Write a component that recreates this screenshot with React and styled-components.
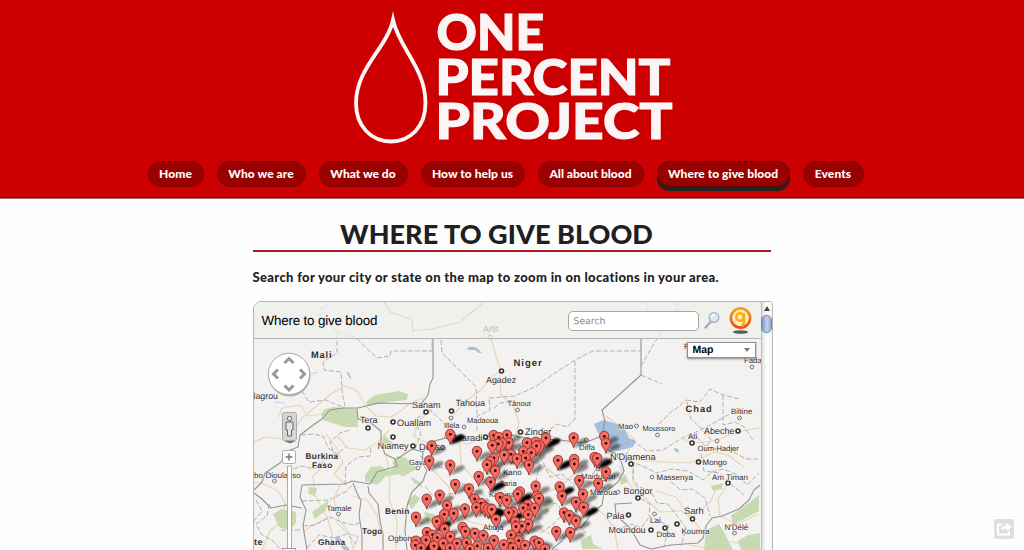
import React from "react";
import styled, { createGlobalStyle } from "styled-components";

const Global = createGlobalStyle`
  html, body { margin: 0; height: 100%; overflow: hidden; background: #fefefe; }
  body { font-family: Lato, "Liberation Sans", sans-serif; color: #222; }
  * { box-sizing: border-box; }
`;

const Page = styled.div`
  display: flex;
  flex-direction: column;
  align-items: center;
  height: 550px;
  overflow: hidden;
`;

const Header = styled.header`
  display: flex;
  flex-direction: column;
  align-items: center;
  flex: none;
  width: 100%;
  height: 199px;
  background: #cc0000;
  border-bottom: 1px solid #b56a6a;
  box-shadow: inset 0 -1px 0 #8f0000;
`;

const Logo = styled.svg`
  display: block;
  flex: none;
  width: 350px;
  height: 150px;
  margin-left: 6px;
  text {
    font: 900 49px Lato, sans-serif;
    fill: #fcf5f5;
    stroke: #fcf5f5;
    stroke-width: 1.1px;
  }
`;

const Nav = styled.nav`
  display: flex;
  gap: 13px;
  margin: 11px 13px 0 0;
`;

const NavItem = styled.a`
  display: flex;
  flex: none;
  align-items: center;
  justify-content: center;
  width: ${(p) => p.$width}px;
  height: 26px;
  padding-bottom: 2px;
  border: 1px solid ${(p) => (p.$active ? "#5a0808" : "#850000")};
  border-radius: 13px;
  background: #990000;
  box-shadow: ${(p) => (p.$active ? "0 4px 0 #222" : "none")};
  color: #fff;
  font-size: 12px;
  font-weight: 900;
  letter-spacing: ${(p) => p.$spacing}px;
  white-space: nowrap;
`;

const Main = styled.main`
  display: flex;
  flex-direction: column;
  width: 520px;
  margin-left: 1px;
`;

const Title = styled.h1`
  width: 518px;
  height: 53px;
  margin: 0;
  padding: 19px 30px 0 0;
  border-bottom: 2px solid #a51c20;
  font-size: 27px;
  line-height: 32px;
  font-weight: 900;
  letter-spacing: 0.05px;
  text-align: center;
  color: #211f1f;
`;

const Intro = styled.p`
  height: 49px;
  margin: 0;
  padding-top: 16px;
  font-size: 13px;
  line-height: 18px;
  font-weight: 900;
  letter-spacing: 0.34px;
  white-space: nowrap;
`;

const MapFrame = styled.section`
  display: flex;
  width: 520px;
  height: 260px;
  border: 1px solid #b5b8b2;
  border-radius: 8px 3px 0 0;
  overflow: hidden;
`;

const MapPane = styled.div`
  position: relative;
  width: 507px;
  height: 260px;
  background: #f3f2f0;
`;

const MapCanvas = styled.svg`
  display: block;
  width: 507px;
  height: 260px;
  font-family: "Liberation Sans", Arial, sans-serif;
  text-rendering: geometricPrecision;
`;

const MapBar = styled.div`
  position: absolute;
  inset: 0 0 auto 0;
  display: flex;
  align-items: center;
  height: 37px;
  padding-left: 8px;
  background: rgba(238, 238, 236, 0.72);
  border-bottom: 1px solid #b5b8b2;
`;

const MapTitle = styled.div`
  width: 306px;
  font: 13.4px "Liberation Sans", Arial, sans-serif;
  letter-spacing: -0.18px;
  text-rendering: geometricPrecision;
  color: #000;
`;

const SearchBox = styled.div`
  width: 131px;
  height: 20px;
  padding: 0 5px;
  margin-top: 1px;
  border: 1px solid #a4a7a4;
  border-radius: 5px;
  background: #fff;
  font: 9.3px/19px "DejaVu Sans", sans-serif;
  text-rendering: geometricPrecision;
  color: #8a8f8b;
`;

const SearchIcon = styled.svg`
  width: 18px;
  height: 20px;
  margin-left: 4px;
`;

const BrandIcon = styled.svg`
  width: 26px;
  height: 30px;
  margin-left: 6px;
`;

const MapType = styled.div`
  position: absolute;
  top: 40px;
  right: 5px;
  display: flex;
  align-items: center;
  justify-content: space-between;
  width: 69px;
  height: 16px;
  padding: 0 5px;
  border: 1px solid #8b939a;
  background: #fff;
  box-shadow: 0 1px 2px #888;
  font: bold 10.5px "Liberation Sans", Arial, sans-serif;
  text-rendering: geometricPrecision;
  color: #000;
`;

const ArrowDown = styled.i`
  border: 3.5px solid transparent;
  border-top: 4px solid #777;
  border-bottom: 0;
`;

const Controls = styled.svg`
  position: absolute;
  left: 12px;
  top: 49px;
  width: 48px;
  height: 210px;
`;

const Scrollbar = styled.div`
  display: flex;
  flex-direction: column;
  align-items: center;
  width: 11px;
  border-left: 1px solid #bbb;
  background: linear-gradient(90deg, #e0e0e0, #fff 45%, #f6f6f6);
`;

const ArrowUp = styled.i`
  margin: 4px 0 4px;
  border: 3px solid transparent;
  border-bottom: 5px solid #444;
  border-top: 0;
`;

const Thumb = styled.div`
  width: 11px;
  height: 18px;
  border: 1px solid #7188b1;
  border-radius: 5px;
  background: linear-gradient(90deg, #7d97c3, #c4d3ea 55%, #91a8cf);
`;

const ShareButton = styled.button`
  position: fixed;
  right: 10px;
  bottom: 11px;
  width: 20px;
  height: 20px;
  padding: 0;
  border: 0;
  border-radius: 2px;
  background: #dfdfdf;
  svg { display: block; }
`;

const navItems = [
  ["Home", 56, 0.05],
  ["Who we are", 89, 0.05],
  ["What we do", 89, 0],
  ["How to help us", 104, 0.04],
  ["All about blood", 106, 0],
  ["Where to give blood", 133, 0.04],
  ["Events", 61, 0.1],
];

// Centre of each marker head, in map coordinates.
const pins = [
  [450.3,434.3],[431.7,445.7],[429.3,460.7],[450.3,465],[477,451.3],[493.7,435.3],[498.7,437.3],[507,435],[492.3,445.3],[498.3,444],[508.7,442.7],
  [527,442.7],[536,442],[539.7,445.7],[546,438],[573.7,437.7],[504.3,455],[511,454.3],[517,458.7],[523.3,451.3],[531.3,452.7],[525.7,458],[529,465],
  [494,458],[490,461.7],[487,464.7],[495.3,470.7],[478.7,476.3],[490.7,482],[455.3,484.3],[469,488.7],[535.7,486],[500,497.3],[506.7,500],[520,491.7],
  [517.7,494],[537,496],[539,498.3],[426.7,499],[439.7,495],[474.7,499],[447,505.3],[465,508.7],[476.3,507.3],[416,517],[453.7,513.3],[444.3,514.3],
  [438.7,520.7],[436.7,521.3],[481,503.3],[485,507.3],[488.3,508.7],[491.7,509.3],[496,519.3],[513.3,512],[508.7,512.7],[523.3,508],[528,504.7],
  [534.7,508],[528.3,514.7],[528.3,524],[515.3,522],[516,526.7],[522,526],[462.7,527.3],[465.3,531.3],[444.7,529],[475,533.3],[483.3,535.3],[511,535],
  [427,532.3],[437.3,537.7],[432.7,535],[426,540],[450.3,536.3],[416,541],[415.3,545.3],[457,543.3],[466.7,542.7],[477.3,546],[494,540.3],[503.7,544.7],
  [510.7,543.3],[518.7,540.7],[525,545.3],[534.7,541],[539,542.7],[443.3,543.3],[434,546],[421,548],[488,548],[604.3,436.3],[606,443.3],[558,460.3],
  [574.3,459.3],[574.3,464],[594.7,457.3],[597.3,458.3],[606,471.7],[579.3,480.3],[598.3,483.3],[559.7,486.7],[562,496],[583,494],[576,502],
  [583.7,507.3],[564,512.7],[569.3,515.3],[576,520.7],[556.3,531.3],[570.3,532.3],[536.5,446],[502,443],[450,548],[470,549],[545,549],[513,548],
].sort((a, b) => a[1] - b[1]);

// Heads of markers that sit on top of several others and cast a solid shadow.
const dense = [[450.3,434.3],[546,438],[490.7,482],[517.7,494],[598,459],[559.7,487],[583.7,507.3],[436.7,521.3],[508.7,512.7],[488,508],[511,454],[437,537],[515.3,524],[558,460.3],[491,510],[426,538],[420,543],[430,545],[441,543]];

const parks = [
  "M366 402L375 395L399 391L408 394L407 400L388 402L368 406Z",
  "M325 409L334 407L357 409L358 427L345 427L323 420L321 414Z",
  "M365 475L371 467L381 466L388 471L397 466L409 459L416 468L402 474L386 476L377 485L365 481Z",
  "M273 514L281 509L296 512L296 523L289 530L279 527Z",
  "M312 512L329 500L326 510L315 519Z",
  "M309 487L317 488L315 496L308 494Z",
  "M384 435L397 447L391 449L382 442Z",
  "M392 463L397 456L407 458L409 465L417 469L402 477Z",
  "M410 476L420 482L423 488L414 483Z",
  "M424 512L434 514L439 521L428 525Z",
  "M619 478L626 475L628 482L621 485Z",
  "M581 540L591 535L593 544L603 549H582Z",
  "M706 530L719 524L725 534L733 550H704Z",
  "M731 515L741 509L759 495V511L742 520L733 525Z",
  "M738 541L748 535L760 533V550H741Z",
  "M711 486L723 483L722 489L713 491Z",
  "M407 502L415 494L420 499L412 509Z",
  "M543 505L552 499L554 505L547 512Z",
];

const borders = [
  "M433 338V378L430 384L428 395L421 404L378 403L358 408L343 408L330 410L322 419L316 423L300 435L298 447L290 450L280 463L265 473L262 482L254 490",
  "M302 485L345 484L352 481L370 484L377 472L397 466L395 459L385 454L381 444L381 431L371 423L358 419L357 409",
  "M302 485L300 497L306 510L303 526L307 550",
  "M353 483L357 493L361 501L359 515L362 534V550",
  "M368 486L369 493L378 504L380 521L383 534V550",
  "M397 459L412 449L423 452L422 463L427 470L423 481L412 492L407 506L405 530L407 550",
  "M423 452L431 442L445 438L459 441L474 438L491 440L506 434L525 438L560 440L584 443L602 436L605 421L602 410L620 394L641 375V338",
  "M254 493L262 499L271 508L286 505L302 508",
  "M760 485L754 490L749 500L739 509L722 516L712 518L706 526L703 538L698 543L671 545L651 549L640 545L631 529L616 515L615 504L632 503",
  "M606 439L607 449L615 454L621 461L624 471L618 482L604 493L602 505L592 513L582 527L569 530L562 541L552 549",
];

const dashed = [
  "M318 314L328 323L337 332V353L323 362L324 370L341 372L342 391L345 406",
  "M330 304L319 310M337 332L355 337L377 358L390 356L391 351H432V338",
  "M441 340L442 353L463 374L476 387L477 415",
  "M477 431L476 417L490 410L489 398L515 396L535 387L555 373L575 360L593 351H641",
  "M575 361V419L567 427L557 424L548 431",
  "M641 366L655 342L680 302M644 302L648 306L636 330M675 302L684 330M641 375L662 384",
  "M686 400L700 402L710 389L723 395L740 399M723 395V425L735 422L744 427L753 440",
  "M307 378L302 391L309 402L326 400L345 408M494 408L500 403L511 402",
  "M345 485L346 466L358 457L370 456L371 446M289 485L287 471L302 466L314 469L324 461L334 454L330 442L340 433L350 430",
  "M301 435L315 434L324 437L328 448L337 454L346 447M302 501L329 500L347 491L353 484",
  "M256 500L262 511L253 522M269 504L267 516L256 524L261 534L273 541L281 550M281 530L302 530",
  "M303 526L315 525L330 517L341 522L354 525L361 522M307 548L319 535L334 538L347 534L356 544",
  "M415 449L421 434L414 420L430 410L442 421L448 430L444 438M420 456L435 466L448 469L451 482L470 485L483 480L484 468L498 461L508 448",
  "M425 486L433 496L456 493L468 488L482 493L493 505L508 507L514 521L526 526L541 522",
  "M527 450L541 458L550 477L562 474L578 488L591 477L602 460M540 464L535 485L542 500L557 504L564 514L551 526L540 533",
  "M605 487L591 490L579 502L574 520L586 533",
  "M607 441L620 447L632 440L647 451L663 450L682 438L701 430L719 420L731 413",
  "M659 424L671 412L677 408L686 400M687 402L691 419L701 428L711 440L701 454L704 471L719 473L733 486L744 495",
  "M612 450L624 459L645 467L656 473L672 469L688 471L703 480L712 472L723 469L738 475L747 485L759 473",
  "M634 462L633 478L638 487L650 490L657 503L668 504L677 516L686 528L681 546M635 495L650 504L649 516L669 526L664 546",
  "M616 530L632 524L641 528L650 516M671 482L681 490L692 489L705 498L710 516M697 437L706 447L732 451L746 459H759",
];

const roads = [
  "M254 442L265 437L283 439L295 429L302 418L320 403L331 394L344 386L357 391L366 406L376 416L391 417L402 410L410 403L424 398",
  "M279 417L282 408L300 405L308 416L322 414M326 434L336 447L343 463L334 474L345 484",
  "M337 436L348 448L365 450L378 442L389 430M262 550L270 531L283 520L285 503L278 491L266 485L254 482",
  "M325 465L313 476L315 496L327 517L332 533L330 550M340 484L334 500L339 520L350 534L353 550",
  "M327 518L311 526L303 532M353 496L367 500L377 515L381 535M386 454L390 478L389 499L397 521L396 550",
  "M432 410L418 421L414 437L428 443L452 437L467 444L486 438L519 434L546 433L567 443L588 442",
  "M491 338L497 360L501 371L492 376L481 390L466 401L455 413L450 421M500 374L501 394L514 408L519 422L516 435",
  "M450 435L460 445L461 463L477 483L483 500L493 510L493 533M417 461L434 471L449 487L452 507L468 521L490 527",
  "M512 442L512 459L499 476L505 492L522 505L534 525L550 534M523 458L544 466L560 479L585 480L607 490",
  "M409 521L428 524L443 532L455 550M528 506L541 495L561 486L583 466",
  "M606 416L623 429L634 439L627 453L632 463L633 483L644 497L660 512L681 511L692 518L711 501L716 489",
  "M681 438L693 443L713 441L738 432L759 428M646 461L664 462L690 463L715 452L728 455L744 467",
  "M656 491L676 497L685 510L693 519L703 533L722 543M728 484L718 499L720 516L737 524L759 514",
  "M690 545L704 548L719 540L739 543M591 505L605 515L615 532L618 550",
];

// Place names: text, x, baseline, font size, bold, letter spacing.
const labels = [
  ["Arlit", 483, 332, 8.8, 0, 0.1],
  ["Mali", 311, 358, 9.3, 1, 0.8],["Niger", 513.5, 365.5, 9.6, 1, 0.9],["Chad", 685.5, 412, 9.3, 1, 1],
  ["Agadez", 486, 382.5, 8.9, 0],["Tahoua", 455.5, 405.5, 9, 0],["Tânout", 507.5, 406, 7.5, 0],
  ["Sanam", 412, 407.5, 9, 0],["Tera", 360, 423, 9, 0],["Ouallam", 397, 425.5, 9.2, 0],
  ["Madaoua", 467, 423, 7.5, 0],["Illéla", 444, 428, 7.5, 0],["Maradi", 454, 440.5, 9.3, 0],["Zinder", 525, 435, 9.3, 0],
  ["Niamey", 377.5, 448.5, 9.2, 0],["Dosso", 419, 449.5, 9.2, 0],["Gaya", 409, 465, 7.5, 0],
  ["lagrou", 253.5, 399, 8.8, 0],["Burkina", 305.5, 459, 8.3, 1, 0.3],["Faso", 312, 468, 8.3, 1, 0.3],
  ["bo-Dioulasso", 254, 477.5, 8, 0],["Tamale", 326.5, 511, 7.8, 0],["Ghana", 318, 544.5, 8.3, 1, 0.3],
  ["Togo", 362, 534, 8.3, 1, 0.2],["Benin", 385, 513.5, 8.3, 1, 0.3],["Ogbomosho", 388, 541, 8, 0],["te", 254, 545, 9, 1, 0.4],
  ["Kano", 503, 475, 8, 0],["Zaria", 499.5, 485.5, 7.5, 0],["Kaduna", 489, 497, 7.5, 0],["Abuja", 483, 530, 8, 0],
  ["Diffa", 579, 450, 7.8, 0],["Maiduguri", 581, 478.5, 7.8, 0],["Maroua", 590, 495, 8, 0],
  ["N'Djamena", 610, 459.5, 9.3, 0],["Bongor", 623.5, 493.5, 9, 0],["Pala", 606.5, 518.5, 9, 0],["Moundou", 608.5, 533, 8.9, 0],
  ["Lai", 650, 523, 8, 0],["Doba", 656.5, 537, 7.8, 0],["Koumra", 681.5, 533.5, 8, 0],["Sarh", 684, 514, 9.3, 0],
  ["N'Délé", 724.5, 529.5, 8, 0],["Massenya", 656.5, 480, 8, 0],["Am Timan", 712, 480, 8, 0],["Mongo", 702.5, 465, 8, 0],
  ["Oum-Hadjer", 697.5, 451, 7.6, 0],["Ati", 688, 439, 8, 0],["Abeche", 704, 434, 9, 0],
  ["Mao", 618, 428.5, 7.8, 0],["Moussoro", 642.5, 431, 7.5, 0],["Biltine", 731, 414, 7.8, 0],["Fada", 744, 363, 7.8, 0],["F", 684, 349, 7.5, 0],
];

// Town dots: x, y, large.
const towns = [
  [490,337,0],[501.5,371,1],[451.5,411,1],[451,418,0],[517.5,410,0],[426,412,1],[368,428,1],[393,422,1],[393,437,1],
  [413,446,1],[485.5,437,1],[520.5,432,1],[464,427,0],[418,468,0],[274.5,481,0],[338.5,514,0],
  [586.5,440,0],[631,464,1],[638,498,1],[618,492,0],[628.5,515,1],[651,530,1],[654.5,514,0],[665,528,1],[677,524,1],
  [692.5,519,1],[734.5,533,0],[652,477,0],[728,483,1],[698.5,462,1],[717,441,0],[692,443,1],[738,431,1],
  [636.5,426,0],[657.5,435,0],[739.5,418,0],[752,367,0],[491,493,0],[598,469,0],
];

function Pin({ x, y }) {
  return (
    <g transform={`translate(${x} ${y})`}>
      <path d="M0 10C-.6 5.5-4.8 3.8-4.8-.3C-4.8-3-2.8-5-.1-5S4.7-3 4.7-.3C4.7 3.8.6 5.5 0 10Z" fill="#fb6a60" stroke="#7a2a25" strokeWidth=".8" />
      <circle r="1.4" fill="#190c0c" />
    </g>
  );
}

function shadowPath([x, y]) {
  return `M${x} ${y + 10}L${x + 3} ${y + 5}Q${x + 7} ${y} ${x + 12} ${y + 0.5}Q${x + 16} ${y + 2} ${x + 13} ${y + 4.5}Q${x + 9} ${y + 7.5} ${x} ${y + 10}Z`;
}

function AfricaMap() {
  return (
    <MapCanvas viewBox="254 302 507 260">
      <defs>
        <filter id="soft"><feGaussianBlur stdDeviation=".8" /></filter>
      </defs>
      <g fill="none" stroke="#e5d7b6" strokeWidth="1.2" strokeLinejoin="round">{roads.map((d) => <path key={d} d={d} />)}</g>
      <g fill="#c7dab1">{parks.map((d) => <path key={d} d={d} />)}</g>
      <g fill="#a5bfdd">
        <path d="M594 424L603 420L621 425L625 430L629 438L636 441L633 447L618 451L610 449L607 439L598 433Z" />
        <path d="M467 348Q474 345 478 349L482 353L479 353L475 350H468Z" />
        <path d="M346 371L349 373L352 379L349 377ZM674 448L678 449L679 453L675 451ZM334 537L339 537L350 550H344Z" />
      </g>
      <path fill="none" stroke="#b6cbe2" strokeWidth=".8" d="M336 522L347 533L359 537M606 519L616 527M274 402L285 403M619 465L626 480L637 494M311 374L318 372M354 548L358 537" />
      <g fill="none" stroke="#b1b1b0" strokeWidth="1" strokeDasharray="5 2">{dashed.map((d) => <path key={d} d={d} />)}</g>
      <path d="M384 302L390 312L405 317L412 319L413 331L432 329L460 322L484 302" fill="none" stroke="#a5a8b0" strokeWidth="1.2" />
      <g fill="none" stroke="#949494" strokeWidth="1.1" strokeLinejoin="round">{borders.map((d) => <path key={d} d={d} />)}</g>
      {towns.map(([x, y, big]) => (
        <circle key={`${x}-${y}`} cx={x} cy={y} r={big ? 2 : 1.9} fill="#eee" stroke={big ? "#333" : "#777"} strokeWidth={big ? 1.6 : 1} />
      ))}
      {labels.map(([text, x, y, size, bold, spacing = 0]) => (
        <text key={text} x={x} y={y} fontSize={size} fontWeight={bold ? 700 : 400} letterSpacing={spacing} fill="#352d2d" stroke="#f5f4f2" strokeWidth="1.2" paintOrder="stroke">{text}</text>
      ))}
      <g fill="#000" opacity=".6" filter="url(#soft)">
        {pins.map((p) => <path key={p.join("-")} opacity=".75" d={shadowPath(p)} />)}
      </g>
      <g fill="#000" filter="url(#soft)">
        {dense.map((p) => <path key={p.join("-")} d={shadowPath(p)} />)}
      </g>
      {pins.map(([x, y]) => <Pin key={`${x}-${y}`} x={x} y={y} />)}
    </MapCanvas>
  );
}

export default function App() {
  return (
    <Page>
      <Global />
      <Header>
        <Logo viewBox="340 0 350 150" aria-label="One Percent Project">
          <path d="M393 20C387 48 356 68 356 103C356 127 372 141.5 391 141.5S425.500 127 425.500 103C425.500 68 399 48 393 20Z" fill="none" stroke="#fcf5f5" strokeWidth="3.8" strokeMiterlimit="10" />
          <text x="436.5" y="50" textLength="107.5" lengthAdjust="spacingAndGlyphs">ONE</text>
          <text x="435.5" y="94.5" textLength="235" lengthAdjust="spacingAndGlyphs">PERCENT</text>
          <text x="435.5" y="139" textLength="237" lengthAdjust="spacingAndGlyphs">PROJECT</text>
        </Logo>
        <Nav>
          {navItems.map(([label, width, spacing]) => (
            <NavItem key={label} $width={width} $spacing={spacing} $active={label === "Where to give blood"}>{label}</NavItem>
          ))}
        </Nav>
      </Header>
      <Main>
        <Title>WHERE TO GIVE BLOOD</Title>
        <Intro>Search for your city or state on the map to zoom in on locations in your area.</Intro>
        <MapFrame>
          <MapPane>
            <AfricaMap />
            <MapBar>
              <MapTitle>Where to give blood</MapTitle>
              <SearchBox>Search</SearchBox>
              <SearchIcon viewBox="0 0 18 20">
                <path d="M2.5 17.5L8 11.5" stroke="#a9a9a9" strokeWidth="2.5" strokeLinecap="round" />
                <circle cx="11" cy="7.5" r="4.8" fill="#d7e9f7" stroke="#aab4bc" strokeWidth="1.4" />
                <path d="M8.5 7Q9 4.5 12 4.5" fill="none" stroke="#fff" strokeWidth="1.5" />
              </SearchIcon>
              <BrandIcon viewBox="0 0 26 30">
                <defs><linearGradient id="orange" x2="0" y2="1"><stop stopColor="#f9a01c" /><stop offset=".5" stopColor="#f2711c" /><stop offset="1" stopColor="#ee4a12" /></linearGradient></defs>
                <ellipse cx="13.5" cy="27" rx="7.5" ry="1.8" fill="#333" opacity=".8" />
                <circle cx="13.5" cy="13" r="9.6" fill="#fff0c0" stroke="url(#orange)" strokeWidth="2.6" />
                <circle cx="13" cy="12" r="3.7" fill="none" stroke="#fbac14" strokeWidth="2.6" />
                <path d="M17 8V17Q17 20 14.5 21" fill="none" stroke="#fbac14" strokeWidth="2.6" />
              </BrandIcon>
            </MapBar>
            <MapType>Map<ArrowDown /></MapType>
            <Controls viewBox="266 351 48 210">
              <path d="M287.5 466H291.5V561H287.5Z" fill="#fff" stroke="#999" strokeWidth=".8" />
              <rect x="282.5" y="412.5" width="14" height="28" rx="2" fill="#d5d5d5" stroke="#aaa" />
              <circle cx="289.5" cy="418.5" r="2.2" fill="#eee" stroke="#666" />
              <path d="M286 422H293V430H291.5V436H287.5V430H286Z" fill="#e5e5e5" stroke="#666" />
              <path d="M284 441H296L290 443.500Z" fill="#777" />
              <rect x="282.5" y="450.5" width="13" height="13" rx="2" fill="#fff" stroke="#aaa" />
              <path d="M285.5 457H292.5M289 453.5V460.5" stroke="#777" strokeWidth="1.5" />
              <rect x="282.5" y="548.5" width="13" height="5" fill="#fff" stroke="#999" />
              <circle cx="289.5" cy="375.5" r="21" fill="#777" opacity=".5" />
              <circle cx="289" cy="374" r="20.7" fill="#fff" stroke="#a8a8a8" />
              <path d="M284.5 363L289 358.500L293.5 363M284.5 385.500L289 390L293.5 385.500M278 369.500L273.500 374L278 378.500M300 369.500L304.500 374L300 378.500" fill="none" stroke="#999" strokeWidth="3" />
            </Controls>
          </MapPane>
          <Scrollbar><ArrowUp /><Thumb /></Scrollbar>
        </MapFrame>
      </Main>
      <ShareButton aria-label="Share">
        <svg width="20" height="20" viewBox="0 0 20 20">
          <path d="M8 5.5H4V15.500H15V12" fill="none" stroke="#fff" strokeWidth="2" />
          <path d="M7 12Q7 6.5 12.5 6.5V3.5L18 8L12.5 12V9.5Q9 9 7 12Z" fill="#fff" />
        </svg>
      </ShareButton>
    </Page>
  );
}
